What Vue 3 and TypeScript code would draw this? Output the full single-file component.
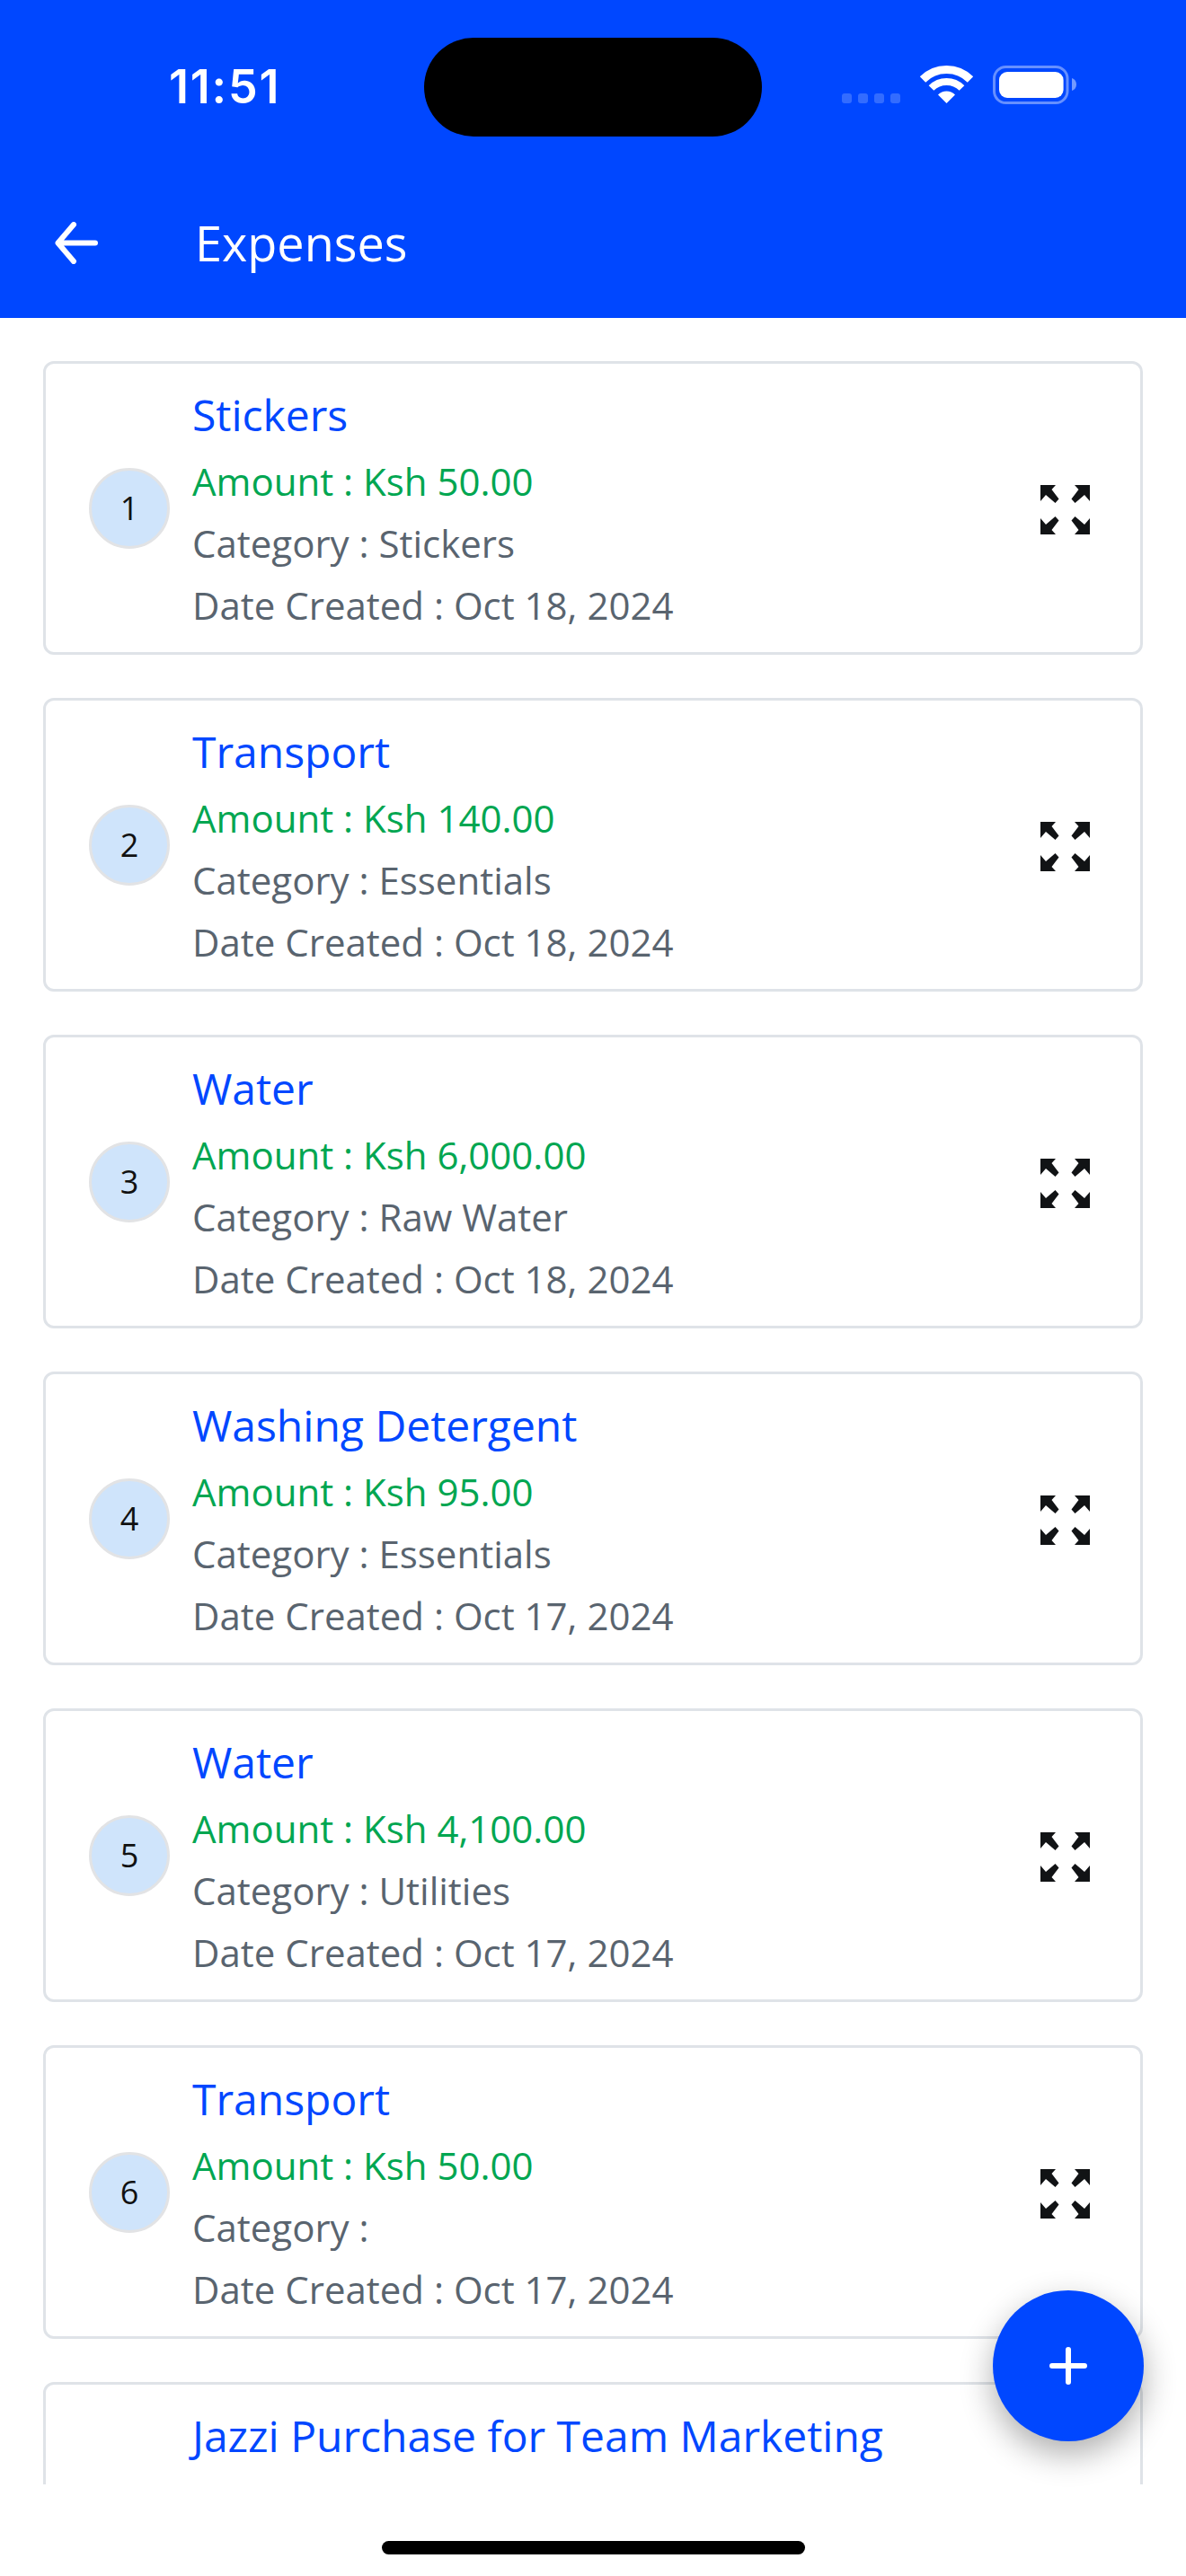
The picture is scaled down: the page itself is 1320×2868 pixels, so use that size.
<script setup lang="ts">
interface Expense {
  title: string
  amount: string
  category: string
  date: string
}

const expenses: Expense[] = [
  { title: 'Stickers', amount: '50.00', category: 'Stickers', date: 'Oct 18, 2024' },
  { title: 'Transport', amount: '140.00', category: 'Essentials', date: 'Oct 18, 2024' },
  { title: 'Water', amount: '6,000.00', category: 'Raw Water', date: 'Oct 18, 2024' },
  { title: 'Washing Detergent', amount: '95.00', category: 'Essentials', date: 'Oct 17, 2024' },
  { title: 'Water', amount: '4,100.00', category: 'Utilities', date: 'Oct 17, 2024' },
  { title: 'Transport', amount: '50.00', category: '', date: 'Oct 17, 2024' }
]
const partialTitle = 'Jazzi Purchase for Team Marketing'
</script>

<template>
  <div class="page">
    <header class="header">
      <div class="status">
        <div class="time-slot"><span class="time">11:51</span></div>
        <div class="island"></div>
        <svg class="status-icons" width="261" height="43" viewBox="0 0 261 43">
          <g fill="#fff" opacity="0.2">
            <rect x="0" y="31" width="11" height="11" rx="3" />
            <rect x="18" y="31" width="11" height="11" rx="3" />
            <rect x="36" y="31" width="11" height="11" rx="3" />
            <rect x="54" y="31" width="11" height="11" rx="3" />
          </g>
          <g fill="none" stroke="#fff">
            <path d="M90 15.500A37.500 37.500 0 0 1 143 15.500" stroke-width="9" />
            <path d="M99.500 25A24 24 0 0 1 133.500 25" stroke-width="8" />
          </g>
          <path d="M116.500 42L107 32.500A13.500 13.500 0 0 1 126 32.500Z" fill="#fff" />
          <rect x="169.500" y="1.500" width="81.500" height="40" rx="13" fill="none" stroke="#fff" stroke-opacity="0.4" stroke-width="3" />
          <rect x="175" y="7" width="71.600" height="29" rx="9" fill="#fff" />
          <path d="M256 14C259 14.800 261 17.500 261 21C261 24.500 259 27.200 256 28Z" fill="#fff" fill-opacity="0.45" />
        </svg>
      </div>
      <div class="nav">
        <svg class="back" width="48" height="47" viewBox="0 0 48 47">
          <path d="M45 23.500H4M21 3L3.500 23.500L21 44" fill="none" stroke="#fff" stroke-width="6" stroke-linecap="round" stroke-linejoin="round" />
        </svg>
        <span class="nav-title">Expenses</span>
      </div>
    </header>

    <main class="list">
      <article v-for="(item, i) in expenses" :key="i" class="card">
        <div class="avatar">{{ i + 1 }}</div>
        <div class="body">
          <div class="title">{{ item.title }}</div>
          <div class="amount">Amount : Ksh {{ item.amount }}</div>
          <div class="meta">Category : {{ item.category }}</div>
          <div class="meta">Date Created : {{ item.date }}</div>
        </div>
        <svg class="expand" width="55" height="55" viewBox="0 0 55 55">
          <g fill="#111315">
            <path d="M0 0H17L12.500 5L20.500 15.500L16.500 20L6 11L0 18Z" />
            <path d="M55 0H38L42.500 5L34.500 15.500L38.500 20L49 11L55 18Z" />
            <path d="M0 55H17L12.500 50L20.500 39.500L16.500 35L6 44L0 37Z" />
            <path d="M55 55H38L42.500 50L34.500 39.500L38.500 35L49 44L55 37Z" />
          </g>
        </svg>
      </article>
      <article class="card card-partial">
        <div class="title">{{ partialTitle }}</div>
      </article>
    </main>

    <footer class="footer"><div class="home-bar"></div></footer>

    <button class="fab" type="button" aria-label="Add expense">
      <svg width="42" height="42" viewBox="0 0 42 42">
        <path d="M21 3V39M3 21H39" fill="none" stroke="#fff" stroke-width="6" stroke-linecap="round" />
      </svg>
    </button>
  </div>
</template>

<style scoped>
.page {
  position: relative;
  width: 1320px;
  height: 2868px;
  display: flex;
  flex-direction: column;
  overflow: hidden;
  background: #fff;
  font-family: "Open Sans", "Noto Sans", sans-serif;
}
.header {
  flex: none;
  height: 354px;
  background: #0047ff;
  color: #fff;
}
.status {
  display: flex;
  align-items: flex-start;
  padding-top: 42px;
}
.time-slot {
  width: 472px;
  padding-left: 188px;
  box-sizing: border-box;
  height: 110px;
  display: flex;
  align-items: center;
}
.time {
  font-family: Inter, "Liberation Sans", sans-serif;
  font-size: 52px;
  font-weight: 600;
  letter-spacing: 1.8px;
  line-height: 1;
}
.island {
  width: 376px;
  height: 110px;
  border-radius: 55px;
  background: #000;
}
.status-icons {
  margin: 31px 0 0 89px;
  display: block;
}
.nav {
  display: flex;
  align-items: center;
  height: 148px;
  margin-top: 44px;
  padding-left: 61px;
}
.back {
  flex: none;
  display: block;
}
.nav-title {
  margin-left: 108px;
  font-size: 54px;
  line-height: 1;
}
.list {
  flex: 1;
  min-height: 0;
  overflow: hidden;
  display: flex;
  flex-direction: column;
  gap: 48px;
  padding: 48px 48px 0;
}
.card {
  flex: none;
  display: flex;
  align-items: center;
  border: 3px solid #dfe3e8;
  border-radius: 12px;
  padding: 24px 56px 24px 48px;
  background: #fff;
}
.card-partial {
  box-sizing: border-box;
  height: 327px;
  align-items: flex-start;
  padding-left: 163px;
}
.avatar {
  flex: none;
  box-sizing: border-box;
  width: 90px;
  height: 90px;
  margin-right: 25px;
  border: 3px solid #e2e3e5;
  border-radius: 50%;
  background: #cfe4fb;
  color: #111;
  font-size: 36px;
  display: flex;
  align-items: center;
  justify-content: center;
}
.body {
  flex: 1;
  min-width: 0;
  display: flex;
  flex-direction: column;
  gap: 12px;
}
.title {
  color: #0047ff;
  font-size: 48px;
  line-height: 66px;
}
.amount {
  color: #00a651;
  font-size: 42px;
  line-height: 57px;
}
.meta {
  color: #59646f;
  font-size: 42px;
  line-height: 57px;
  min-height: 57px;
}
.expand {
  flex: none;
  display: block;
  margin-top: 4px;
}
.footer {
  flex: none;
  height: 102px;
  background: #fff;
  display: flex;
  justify-content: center;
  position: relative;
}
.home-bar {
  width: 471px;
  height: 15px;
  margin-top: 63px;
  border-radius: 8px;
  background: #000;
}
.fab {
  position: absolute;
  left: 1105px;
  top: 2550px;
  width: 168px;
  height: 168px;
  padding: 0;
  border: 0;
  border-radius: 50%;
  background: #0047ff;
  display: flex;
  align-items: center;
  justify-content: center;
  box-shadow: 0 14px 36px rgba(0, 0, 0, 0.32);
}
.fab svg {
  display: block;
}
</style>

<style>
html, body {
  margin: 0;
  background: #fff;
}
</style>
